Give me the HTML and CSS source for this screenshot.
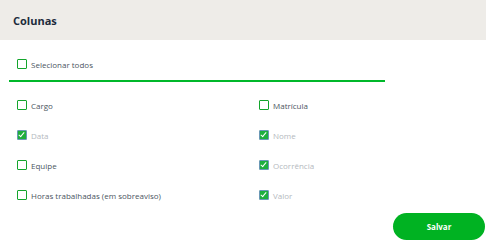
FILE: index.html
```html
<!DOCTYPE html>
<html lang="pt">
<head>
  <meta charset="UTF-8">
  <meta name="viewport" content="width=device-width, initial-scale=1.0">
  <title>Colunas</title>
  <link rel="stylesheet" href="styles.css">
</head>
<body>
  <div class="modal">
    <div class="modal-header">
      <h2>Colunas</h2>
    </div>

    <div class="modal-body">
      <label class="check select-all">
        <span class="box"></span>
        <span class="label">Selecionar todos</span>
      </label>
      <div class="divider"></div>

      <div class="columns-grid">
        <label class="check"><span class="box"></span><span class="label">Cargo</span></label>
        <label class="check"><span class="box"></span><span class="label">Matrícula</span></label>
        <label class="check disabled"><span class="box checked"></span><span class="label">Data</span></label>
        <label class="check disabled"><span class="box checked"></span><span class="label">Nome</span></label>
        <label class="check"><span class="box"></span><span class="label">Equipe</span></label>
        <label class="check disabled"><span class="box checked"></span><span class="label">Ocorrência</span></label>
        <label class="check"><span class="box"></span><span class="label">Horas trabalhadas (em sobreaviso)</span></label>
        <label class="check disabled"><span class="box checked"></span><span class="label">Valor</span></label>
      </div>

      <div class="actions">
        <button class="btn-save">Salvar</button>
      </div>
    </div>
  </div>
</body>
</html>
```

FILE: styles.css
```css
/* base */
body {
  margin: 0;
  font-family: "Open Sans", "Noto Sans", sans-serif;
  background: #ffffff;
}

.modal {
  width: 486px;
  height: 247px;
}

/* header */
.modal-header {
  background-color: #eeece8;
  height: 40px;
  display: flex;
  align-items: center;
  padding-left: 13px;
}

.modal-header h2 {
  margin: 0;
  font-size: 11px;
  font-weight: 700;
  color: #1c2b3b;
}

/* body */
.modal-body {
  padding: 19px 1px 0 9px;
}

.check {
  display: flex;
  align-items: center;
  gap: 4px;
  height: 10px;
  font-size: 8px;
  color: #4b5561;
}

.select-all {
  padding-left: 8px;
}

.divider {
  width: 376px;
  height: 2px;
  background-color: #00b82a;
  margin-top: 11px;
}

.box {
  width: 8px;
  height: 8px;
  border: 1px solid #13a52c;
  border-radius: 1px;
  flex-shrink: 0;
  position: relative;
}

.box.checked {
  background-color: #1fae3c;
  border-color: #6b98b6;
}

.box.checked::after {
  content: "";
  position: absolute;
  left: 2px;
  top: 0px;
  width: 2px;
  height: 5px;
  border: solid #ffffff;
  border-width: 0 1.5px 1.5px 0;
  transform: rotate(40deg);
}

.check.disabled {
  color: #b4b9be;
}

.columns-grid {
  display: grid;
  grid-template-columns: 242px 1fr;
  row-gap: 20px;
  padding-left: 8px;
  margin-top: 18px;
}

/* botão */
.actions {
  display: flex;
  justify-content: flex-end;
  margin-top: 13px;
}

.btn-save {
  width: 92px;
  height: 27px;
  border: none;
  border-radius: 14px;
  background-color: #00b222;
  color: #ffffff;
  font-family: inherit;
  font-size: 8px;
  font-weight: 700;
  cursor: pointer;
}
```
